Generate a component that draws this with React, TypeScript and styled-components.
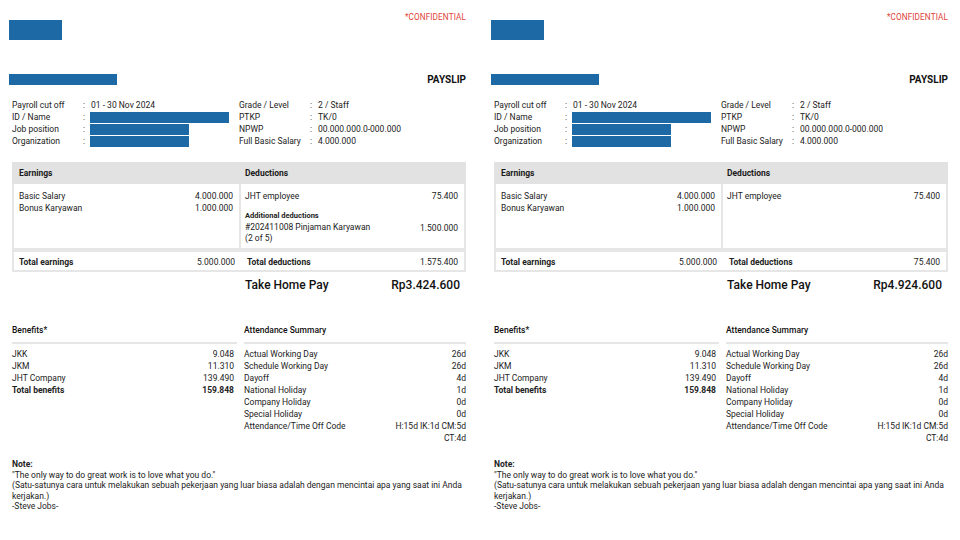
import React from "react";
import styled, { createGlobalStyle } from "styled-components";

type Line = { label: string; value: string };

type Slip = {
  deductions: Line[];
  additional?: { label: string; value: string };
  totalDeductions: string;
  takeHome: string;
};

const GlobalStyle = createGlobalStyle`
  body {
    margin: 0;
    background: #ffffff;
    font-family: Roboto, "Liberation Sans", Arial, sans-serif;
    color: #222222;
  }
`;

const Page = styled.div`
  display: flex;
  gap: 25px;
  padding: 0 9px;
  width: 960px;
  height: 540px;
  box-sizing: border-box;
  overflow: hidden;
`;

const Panel = styled.div`
  width: 457px;
  display: flex;
  flex-direction: column;
  font-size: 8.5px;
`;

const Header = styled.div`
  display: flex;
  justify-content: space-between;
  align-items: flex-start;
  height: 40px;
`;

const Logo = styled.div`
  width: 53px;
  height: 20px;
  margin-top: 20px;
  background: #1d69a6;
`;

const Confidential = styled.div`
  margin-top: 12px;
  line-height: 10px;
  font-size: 8.2px;
  color: #e0443a;
  letter-spacing: 0.1px;
`;

const TitleRow = styled.div`
  display: flex;
  justify-content: space-between;
  align-items: center;
  height: 11px;
  margin-top: 34px;
`;

const Redacted = styled.div<{ $w: number }>`
  width: ${(p) => p.$w}px;
  height: 11px;
  background: #1d69a6;
`;

const Title = styled.div`
  font-size: 10px;
  font-weight: 700;
  color: #111111;
`;

const InfoGrid = styled.div`
  display: grid;
  grid-template-columns: 230px 1fr;
  margin-top: 14px;
`;

const InfoCol = styled.div<{ $indent?: number }>`
  padding-left: ${(p) => p.$indent ?? 0}px;
`;

const InfoRow = styled.div`
  display: grid;
  grid-template-columns: 71px 8px 1fr;
  height: 12px;
  line-height: 12px;
  align-items: center;
`;

const InfoBar = styled.div<{ $w: number }>`
  width: ${(p) => p.$w}px;
  height: 11px;
  margin-left: -1px;
  background: #1d69a6;
`;

const Table = styled.div`
  margin: 15px 0 0 3px;
  width: 454px;
`;

const TwoCols = styled.div`
  display: grid;
  grid-template-columns: 227px 1fr;
`;

const HeadRow = styled(TwoCols)`
  height: 22px;
  line-height: 22px;
  background: #e2e2e2;
  font-weight: 700;
  color: #1a1a1a;
`;

const HeadCell = styled.div<{ $pad: number }>`
  padding-left: ${(p) => p.$pad}px;
`;

const BodyRow = styled(TwoCols)`
  height: 66px;
  border: 2px solid #e6e6e6;
  border-top: none;
  box-sizing: border-box;
`;

const BodyCell = styled.div<{ $divider?: boolean; $padL: number }>`
  padding: 6px 6px 0 ${(p) => p.$padL}px;
  border-right: ${(p) => (p.$divider ? "2px solid #e6e6e6" : "none")};
  line-height: 12px;
`;

const LineRow = styled.div<{ $gap?: number }>`
  display: flex;
  justify-content: space-between;
  align-items: flex-start;
  margin-top: ${(p) => p.$gap ?? 0}px;
`;

const SubTitle = styled.div`
  margin-top: 9px;
  font-size: 7.5px;
  font-weight: 700;
  line-height: 10px;
`;

const WrapLabel = styled.div`
  width: 130px;
  line-height: 11px;
`;

const TotalRow = styled(TwoCols)`
  height: 22px;
  line-height: 20px;
  border: 2px solid #e6e6e6;
  box-sizing: border-box;
`;

const TotalCell = styled.div<{ $padL: number }>`
  display: flex;
  justify-content: space-between;
  padding: 0 6px 0 ${(p) => p.$padL}px;
  font-weight: 700;
  & > span:last-child {
    font-weight: 400;
  }
`;

const TakeHome = styled(TwoCols)`
  height: 26px;
  line-height: 26px;
  font-size: 12px;
  font-weight: 500;
  color: #111111;
`;

const TakeHomeCell = styled.div`
  display: flex;
  justify-content: space-between;
  padding: 0 6px 0 6px;
`;

const Summary = styled.div`
  display: grid;
  grid-template-columns: 225px 222px;
  column-gap: 7px;
  margin: 26px 0 0 3px;
`;

const SumHead = styled.div`
  line-height: 12px;
  padding-bottom: 6px;
  border-bottom: 2px solid #e6e6e6;
  font-weight: 500;
  color: #111111;
  margin-bottom: 4px;
`;

const SumRow = styled.div<{ $bold?: boolean; $padR: number }>`
  display: flex;
  justify-content: space-between;
  align-items: flex-start;
  line-height: 12px;
  padding-right: ${(p) => p.$padR}px;
  font-weight: ${(p) => (p.$bold ? 700 : 400)};
`;

const Right = styled.span`
  text-align: right;
`;

const Note = styled.div`
  margin: 15px 0 0 3px;
  line-height: 10.5px;
  width: 452px;
`;

const NoteTitle = styled.div`
  font-weight: 700;
`;

const info = {
  left: [
    { label: "Payroll cut off", value: "01 - 30 Nov 2024" },
    { label: "ID / Name", bar: 139 },
    { label: "Job position", bar: 99 },
    { label: "Organization", bar: 99 },
  ],
  right: [
    { label: "Grade / Level", value: "2 / Staff" },
    { label: "PTKP", value: "TK/0" },
    { label: "NPWP", value: "00.000.000.0-000.000" },
    { label: "Full Basic Salary", value: "4.000.000" },
  ],
};

const earnings: Line[] = [
  { label: "Basic Salary", value: "4.000.000" },
  { label: "Bonus Karyawan", value: "1.000.000" },
];

const benefits: Line[] = [
  { label: "JKK", value: "9.048" },
  { label: "JKM", value: "11.310" },
  { label: "JHT Company", value: "139.490" },
];

const attendance: Line[] = [
  { label: "Actual Working Day", value: "26d" },
  { label: "Schedule Working Day", value: "26d" },
  { label: "Dayoff", value: "4d" },
  { label: "National Holiday", value: "1d" },
  { label: "Company Holiday", value: "0d" },
  { label: "Special Holiday", value: "0d" },
];

const slips: Slip[] = [
  {
    deductions: [{ label: "JHT employee", value: "75.400" }],
    additional: {
      label: "#202411008 Pinjaman Karyawan (2 of 5)",
      value: "1.500.000",
    },
    totalDeductions: "1.575.400",
    takeHome: "Rp3.424.600",
  },
  {
    deductions: [{ label: "JHT employee", value: "75.400" }],
    totalDeductions: "75.400",
    takeHome: "Rp4.924.600",
  },
];

const Payslip: React.FC<{ slip: Slip }> = ({ slip }) => (
  <Panel>
    <Header>
      <Logo />
      <Confidential>*CONFIDENTIAL</Confidential>
    </Header>
    <TitleRow>
      <Redacted $w={108} />
      <Title>PAYSLIP</Title>
    </TitleRow>

    <InfoGrid>
      <InfoCol $indent={3}>
        {info.left.map((r) => (
          <InfoRow key={r.label}>
            <span>{r.label}</span>
            <span>:</span>
            {"bar" in r && r.bar ? <InfoBar $w={r.bar} /> : <span>{r.value}</span>}
          </InfoRow>
        ))}
      </InfoCol>
      <InfoCol>
        {info.right.map((r) => (
          <InfoRow key={r.label}>
            <span>{r.label}</span>
            <span>:</span>
            <span>{r.value}</span>
          </InfoRow>
        ))}
      </InfoCol>
    </InfoGrid>

    <Table>
      <HeadRow>
        <HeadCell $pad={7}>Earnings</HeadCell>
        <HeadCell $pad={6}>Deductions</HeadCell>
      </HeadRow>
      <BodyRow>
        <BodyCell $divider $padL={5}>
          {earnings.map((e) => (
            <LineRow key={e.label}>
              <span>{e.label}</span>
              <span>{e.value}</span>
            </LineRow>
          ))}
        </BodyCell>
        <BodyCell $padL={4}>
          {slip.deductions.map((d) => (
            <LineRow key={d.label}>
              <span>{d.label}</span>
              <span>{d.value}</span>
            </LineRow>
          ))}
          {slip.additional && (
            <>
              <SubTitle>Additional deductions</SubTitle>
              <LineRow $gap={1}>
                <WrapLabel>{slip.additional.label}</WrapLabel>
                <span>{slip.additional.value}</span>
              </LineRow>
            </>
          )}
        </BodyCell>
      </BodyRow>
      <TotalRow>
        <TotalCell $padL={5}>
          <span>Total earnings</span>
          <span>5.000.000</span>
        </TotalCell>
        <TotalCell $padL={6}>
          <span>Total deductions</span>
          <span>{slip.totalDeductions}</span>
        </TotalCell>
      </TotalRow>
      <TakeHome>
        <div />
        <TakeHomeCell>
          <span>Take Home Pay</span>
          <span>{slip.takeHome}</span>
        </TakeHomeCell>
      </TakeHome>
    </Table>

    <Summary>
      <div>
        <SumHead>Benefits*</SumHead>
        {benefits.map((b) => (
          <SumRow key={b.label} $padR={3}>
            <span>{b.label}</span>
            <span>{b.value}</span>
          </SumRow>
        ))}
        <SumRow $bold $padR={3}>
          <span>Total benefits</span>
          <span>159.848</span>
        </SumRow>
      </div>
      <div>
        <SumHead>Attendance Summary</SumHead>
        {attendance.map((a) => (
          <SumRow key={a.label} $padR={0}>
            <span>{a.label}</span>
            <span>{a.value}</span>
          </SumRow>
        ))}
        <SumRow $padR={0}>
          <span>Attendance/Time Off Code</span>
          <Right>
            H:15d IK:1d CM:5d
            <br />
            CT:4d
          </Right>
        </SumRow>
      </div>
    </Summary>

    <Note>
      <NoteTitle>Note:</NoteTitle>
      <div>"The only way to do great work is to love what you do."</div>
      <div>
        (Satu-satunya cara untuk melakukan sebuah pekerjaan yang luar biasa
        adalah dengan mencintai apa yang saat ini Anda kerjakan.)
      </div>
      <div>-Steve Jobs-</div>
    </Note>
  </Panel>
);

export default function App() {
  return (
    <>
      <GlobalStyle />
      <Page>
        {slips.map((s, i) => (
          <Payslip key={i} slip={s} />
        ))}
      </Page>
    </>
  );
}
